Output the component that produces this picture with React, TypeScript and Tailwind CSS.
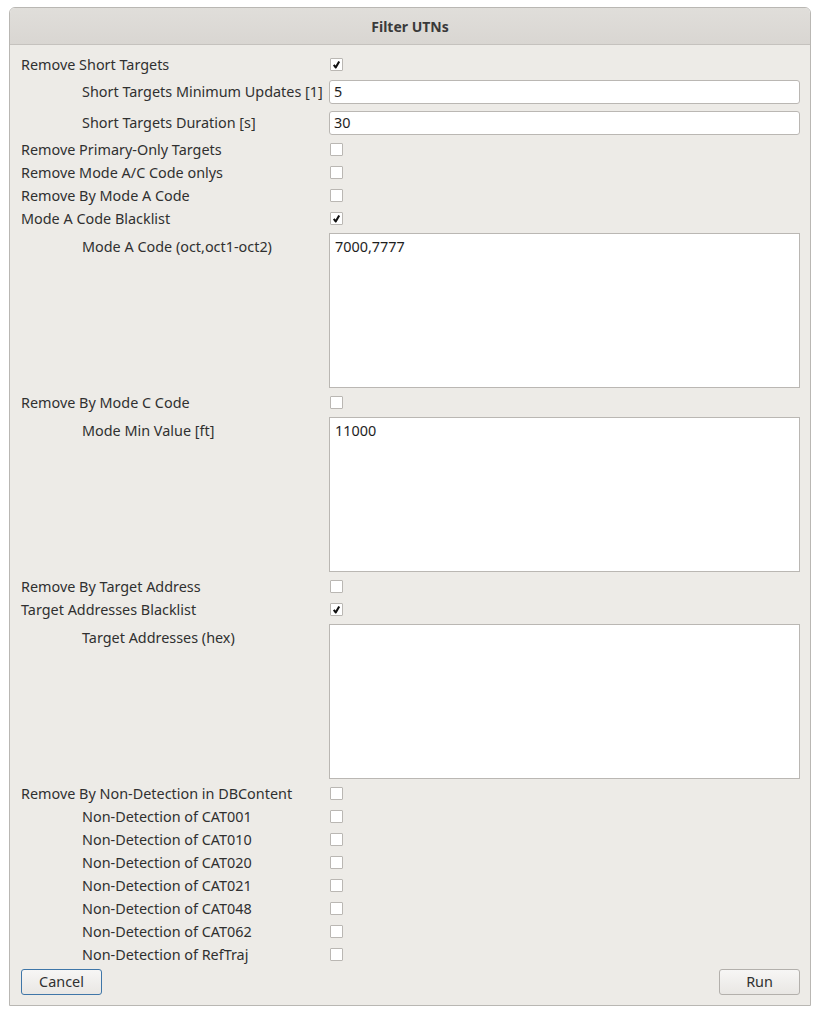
import React from 'react';

const CheckBox = ({ checked }: { checked?: boolean }) => (
  <div className="ml-[1px] flex h-[13px] w-[13px] items-center justify-center rounded-[1px] border border-[#bab7b3] bg-white">
    {checked && (
      <svg width="9" height="9" viewBox="0 0 9 9">
        <path d="M1.8 4.8 L3.7 7.5 L7.2 1.4" fill="none" stroke="#111" strokeWidth="2.1" strokeLinejoin="round" />
      </svg>
    )}
  </div>
);

const CheckRow = ({ label, checked, indent }: { label: string; checked?: boolean; indent?: boolean }) => (
  <>
    <div className={`flex h-[23px] items-center ${indent ? 'pl-[61px]' : ''}`}>{label}</div>
    <div className="flex h-[23px] items-center">
      <CheckBox checked={checked} />
    </div>
  </>
);

const InputRow = ({ label, value }: { label: string; value: string }) => (
  <>
    <div className="flex h-[31px] items-center pl-[61px] pt-[1px]">{label}</div>
    <div className="pb-[3px] pt-[4px]">
      <div className="flex h-[24px] items-center rounded-[3px] border border-[#bab7b3] bg-white pl-[4px] text-[#1e1e1e]">
        {value}
      </div>
    </div>
  </>
);

const TextAreaRow = ({ label, value }: { label: string; value: string }) => (
  <>
    <div className="pl-[61px] pt-[7px] leading-[20px]">{label}</div>
    <div className="py-[3px]">
      <div className="h-[155px] border border-[#bab7b3] bg-white px-[5px] pt-[3px] leading-[20px] text-[#1e1e1e]">
        {value}
      </div>
    </div>
  </>
);

export default function App() {
  const cats = ['CAT001', 'CAT010', 'CAT020', 'CAT021', 'CAT048', 'CAT062', 'RefTraj'];

  return (
    <div className="min-h-[1015px] bg-white pt-[7px] font-['Noto_Sans',sans-serif] text-[14.4px] text-[#303030]">
      <div className="ml-[9px] w-[802px] overflow-hidden rounded-t-[6px] border border-[#b9b7b3]">
        {/* Title bar */}
        <div className="flex h-[37px] items-center justify-center border-b border-[#c5c2be] bg-gradient-to-b from-[#e0deda] to-[#d9d6d2] text-[14px] font-bold text-[#3a3a3a]">
          Filter UTNs
        </div>

        {/* Body */}
        <div className="bg-[#edebe7] pb-[10px] pl-[11px] pr-[10px] pt-[8px]">
          <div className="grid grid-cols-[308px_471px]">
            <CheckRow label="Remove Short Targets" checked />
            <InputRow label="Short Targets Minimum Updates [1]" value="5" />
            <InputRow label="Short Targets Duration [s]" value="30" />
            <CheckRow label="Remove Primary-Only Targets" />
            <CheckRow label="Remove Mode A/C Code onlys" />
            <CheckRow label="Remove By Mode A Code" />
            <CheckRow label="Mode A Code Blacklist" checked />
            <TextAreaRow label="Mode A Code (oct,oct1-oct2)" value="7000,7777" />
            <CheckRow label="Remove By Mode C Code" />
            <TextAreaRow label="Mode Min Value [ft]" value="11000" />
            <CheckRow label="Remove By Target Address" />
            <CheckRow label="Target Addresses Blacklist" checked />
            <TextAreaRow label="Target Addresses (hex)" value="" />
            <CheckRow label="Remove By Non-Detection in DBContent" />
            {cats.map((c) => (
              <CheckRow key={c} label={`Non-Detection of ${c}`} indent />
            ))}
          </div>

          <div className="flex justify-between pt-[3px]">
            <button className="h-[26px] w-[81px] rounded-[3px] border border-[#3f76a8] bg-gradient-to-b from-[#f7f6f5] to-[#e9e7e4] text-[#303030]">
              Cancel
            </button>
            <button className="h-[26px] w-[81px] rounded-[3px] border border-[#b3b0ac] bg-gradient-to-b from-[#f7f6f5] to-[#e9e7e4] text-[#303030]">
              Run
            </button>
          </div>
        </div>
      </div>
    </div>
  );
}
